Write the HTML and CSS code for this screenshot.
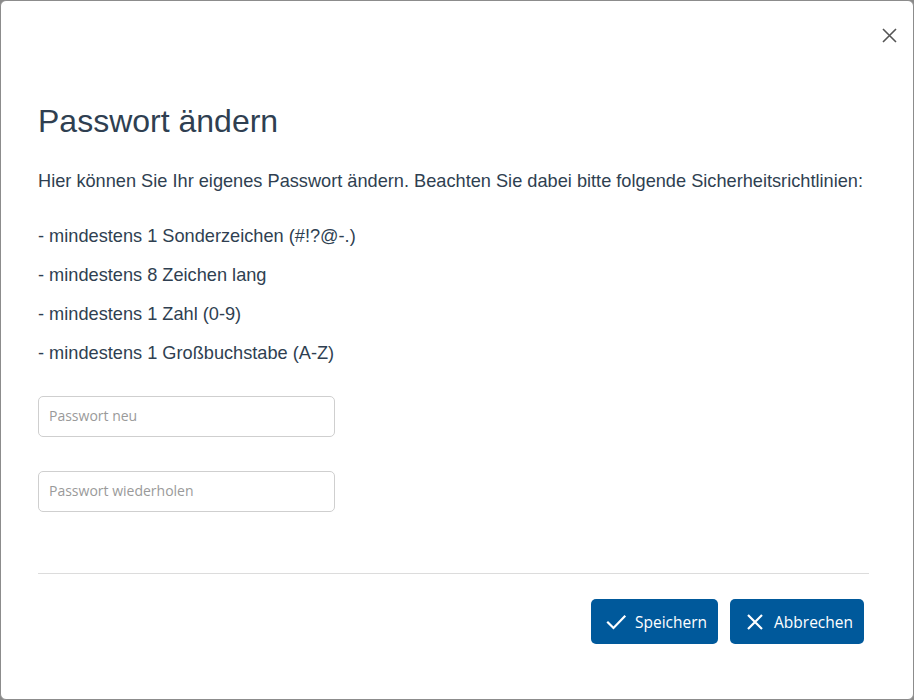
FILE: index.html
```html
<!DOCTYPE html>
<html lang="de">
<head>
<meta charset="utf-8">
<title>Passwort ändern</title>
<link rel="stylesheet" href="styles.css">
</head>
<body>
<div class="dialog">
  <button class="close" aria-label="Schließen">
    <svg width="15" height="15" viewBox="0 0 15 15"><path d="M1 1L14 14M14 1L1 14" stroke="#555" stroke-width="1.6" fill="none"/></svg>
  </button>
  <h1 class="title">Passwort ändern</h1>
  <p class="intro">Hier können Sie Ihr eigenes Passwort ändern. Beachten Sie dabei bitte folgende Sicherheitsrichtlinien:</p>
  <div class="rules">
    <p class="rule">- mindestens 1 Sonderzeichen (#!?@-.)</p>
    <p class="rule">- mindestens 8 Zeichen lang</p>
    <p class="rule">- mindestens 1 Zahl (0-9)</p>
    <p class="rule">- mindestens 1 Großbuchstabe (A-Z)</p>
  </div>
  <div class="fields">
    <input class="field" type="password" placeholder="Passwort neu">
    <input class="field" type="password" placeholder="Passwort wiederholen">
  </div>
  <hr class="divider">
  <div class="footer">
    <button class="btn">
      <svg width="22" height="22" viewBox="0 0 22 22"><path d="M3 11.5L8.5 17L19.5 5.5" stroke="#fff" stroke-width="2.2" fill="none" stroke-linecap="square"/></svg>
      <span>Speichern</span>
    </button>
    <button class="btn">
      <svg width="22" height="22" viewBox="0 0 22 22"><path d="M4 4L18 18M18 4L4 18" stroke="#fff" stroke-width="2.2" fill="none"/></svg>
      <span>Abbrechen</span>
    </button>
  </div>
</div>
</body>
</html>
```
FILE: styles.css
```css
html, body {
  margin: 0;
  padding: 0;
}
body {
  background: #8a8a8a;
  width: 914px;
  height: 700px;
  overflow: hidden;
  font-family: "Liberation Sans", Arial, sans-serif;
  color: #2f3f51;
}
.dialog {
  position: relative;
  box-sizing: border-box;
  width: 914px;
  height: 700px;
  background: #fff;
  border: 1px solid #8c8c8c;
  border-radius: 6px;
  padding: 101px 44px 0 37px;
  display: flex;
  flex-direction: column;
}
.close {
  position: absolute;
  top: 26px;
  right: 15px;
  width: 17px;
  height: 17px;
  padding: 1px;
  border: 0;
  background: none;
  display: flex;
  align-items: center;
  justify-content: center;
}
.title {
  margin: 0;
  font-size: 32px;
  font-weight: 400;
  line-height: 38px;
}
.intro {
  margin: 29px 0 0;
  font-size: 18.2px;
  line-height: 24px;
  white-space: nowrap;
}
.rules {
  margin-top: 31px;
  display: flex;
  flex-direction: column;
  gap: 15px;
}
.rule {
  margin: 0;
  font-size: 18.2px;
  line-height: 24px;
}
.fields {
  margin-top: 31px;
  display: flex;
  flex-direction: column;
  gap: 34px;
}
.field {
  box-sizing: border-box;
  width: 297px;
  height: 41px;
  border: 1px solid #cfcfcf;
  border-radius: 5px;
  padding: 0 10px 3px;
  font-family: "Open Sans", "Noto Sans", sans-serif;
  font-size: 14px;
  color: #333;
  outline: none;
}
.field::placeholder {
  color: #9a9a9a;
}
.divider {
  margin: 61px 0 0;
  border: 0;
  border-top: 1px solid #dcdcdc;
  height: 0;
}
.footer {
  margin-top: 25px;
  padding-right: 5px;
  display: flex;
  justify-content: flex-end;
  gap: 12px;
}
.btn {
  height: 45px;
  padding: 0 11px 0 14px;
  border: 0;
  border-radius: 5px;
  background: #00599b;
  color: #fff;
  font-family: "Open Sans", "Noto Sans", sans-serif;
  font-size: 15.5px;
  display: flex;
  align-items: center;
  gap: 8px;
}
.btn svg {
  display: block;
}
```
